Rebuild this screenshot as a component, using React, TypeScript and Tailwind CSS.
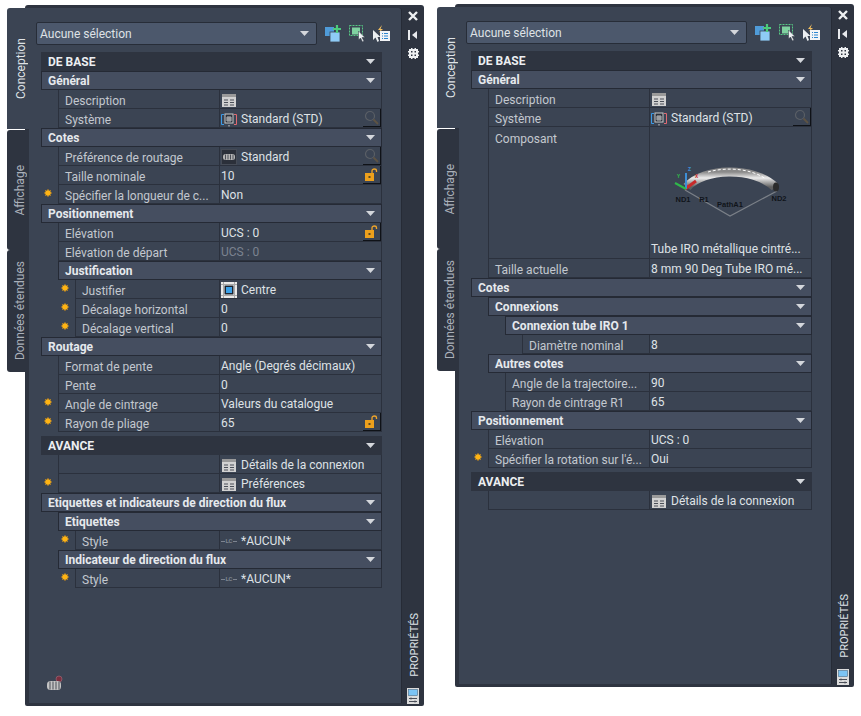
import React from "react";

function Arrow(): React.ReactElement {
    return (
        <svg width="9" height="5" viewBox="0 0 9 5" className="shrink-0">
            <path d="M0 0H9L4.5 5Z" fill="#d4d7dc" />
        </svg>
    );
}

function Dot(): React.ReactElement {
    return (
        <svg width="8" height="8" viewBox="0 0 8 8" className="shrink-0">
            <path
                d="M4 0V8M0 4H8M1.2 1.2L6.8 6.8M6.8 1.2L1.2 6.8"
                stroke="#e89a10"
                strokeWidth=".8"
            />
            <circle cx="4" cy="4" r="2.8" fill="#ffb414" />
        </svg>
    );
}

function TableIcon(): React.ReactElement {
    return (
        <svg width="14" height="13" viewBox="0 0 14 13" className="mx-px">
            <rect width="14" height="13" fill="#d2d2d2" />
            <rect width="14" height="3" fill="#9a9a9a" />
            <path d="M2 6H6M8 6H12M2 8.5H6M8 8.5H12M2 11H6M8 11H12" stroke="#4a4f58" />
        </svg>
    );
}

function SystemIcon(): React.ReactElement {
    return (
        <svg width="16" height="15" viewBox="0 0 16 15">
            <path d="M3 2.5H.5V12.5H3" fill="none" stroke="#3b9be8" />
            <path d="M13 2.5H15.5V12.5H13" fill="none" stroke="#e06a72" />
            <rect x="4" y="2" width="8" height="9" fill="#2c323d" stroke="#c9c9c9" />
            <path d="M6 5H10V9H6ZM8 5V9M6 7H10" fill="none" stroke="#dcdcdc" strokeWidth=".8" />
            <rect x="7.5" y="13" width="1" height="1.5" fill="#cfcfcf" />
        </svg>
    );
}

function CoilIcon(): React.ReactElement {
    return (
        <svg width="16" height="16" viewBox="0 0 16 16">
            <rect x=".5" y=".5" width="15" height="15" fill="#2b303a" stroke="#454b56" />
            <rect x="2" y="5" width="12" height="6" rx="2.5" fill="#b5b5b5" />
            <path d="M4.5 5.5V10.5M7 5.5V10.5M9.5 5.5V10.5M12 5.5V10.5" stroke="#4b4f57" />
        </svg>
    );
}

function CentreIcon(): React.ReactElement {
    return (
        <svg width="16" height="16" viewBox="0 0 16 16">
            <rect width="16" height="16" fill="#e9e9e9" />
            <path d="M2.5 0V16M13.5 0V16M0 2.5H16M0 13.5H16" stroke="#a8a8a8" />
            <rect x="3" y="3" width="10" height="10" fill="#f4f4f4" />
            <rect x="3.5" y="3.5" width="9" height="9" fill="#1d2530" />
            <rect x="5" y="5" width="6" height="6" fill="#3aa0e8" />
        </svg>
    );
}

function LineIcon(): React.ReactElement {
    return (
        <span className="flex w-[16px] items-center text-[6px] leading-none font-bold text-[#7d8490]">
            <span className="h-px w-[4px] bg-[#7d8490]" />
            <span className="px-px">LC</span>
            <span className="h-px w-[4px] bg-[#7d8490]" />
        </span>
    );
}

function SearchButton(): React.ReactElement {
    return (
        <span className="ml-auto flex h-[18px] w-[18px] items-center justify-center border-r border-b border-[#0f1217]">
            <svg width="15" height="15" viewBox="0 0 15 15">
                <circle cx="6" cy="6" r="4.5" fill="none" stroke="#5a5f66" strokeWidth="1.2" />
                <path d="M9.5 9.5L14 14" stroke="#5e5343" strokeWidth="1.8" />
            </svg>
        </span>
    );
}

function LockButton(): React.ReactElement {
    return (
        <span className="ml-auto flex h-[18px] w-[18px] items-center justify-center border-r border-b border-[#0f1217]">
            <svg width="13" height="13" viewBox="0 0 13 13">
                <path d="M7 5V2.8C7 .4 11.5 .4 11.5 2.8V4" fill="none" stroke="#f0a52a" strokeWidth="1.3" />
                <rect x="0" y="5" width="9" height="8" fill="#eda01c" />
                <rect x="3.5" y="8" width="2" height="2" fill="#5e4a20" />
            </svg>
        </span>
    );
}

function BaseBar({ title }: { title: string }): React.ReactElement {
    return (
        <div className="flex h-[19px] items-center justify-between bg-[#2e3440] pr-[7px] pl-[7px] text-[12px] font-bold text-[#eceef1]">
            <span>{title}</span>
            <Arrow />
        </div>
    );
}

function Section({ title, level = 0 }: { title: string; level?: number }): React.ReactElement {
    const indent = level === 2 ? "ml-[34px]" : level === 1 ? "ml-[17px]" : "ml-0";
    return (
        <div
            className={`${indent} flex h-[19px] items-center justify-between border
            border-[#252a35] bg-[#454e60] pr-[6px] pl-[6px] text-[12px] font-bold text-[#e6e9ed]`}
        >
            <span>{title}</span>
            <Arrow />
        </div>
    );
}

type RowProps = {
    label?: string;
    value?: string;
    level?: number;
    dot?: boolean;
    dim?: boolean;
    icon?: React.ReactNode;
    action?: React.ReactNode;
};

function Row({ label, value, level = 1, dot, dim, icon, action }: RowProps): React.ReactElement {
    const gutter = level === 3 ? "w-[51px]" : level === 2 ? "w-[34px]" : "w-[17px]";
    return (
        <div className="flex h-[19px]">
            <div className={`${gutter} flex shrink-0 items-center justify-end pr-[6px] pb-[4px]`}>
                {dot && <Dot />}
            </div>
            <div className="flex min-w-0 flex-1 items-center border-b border-l border-[#2b313d] pt-[4px] pl-[6px] text-[#c3c8cf]">
                <span className="whitespace-nowrap">{label}</span>
            </div>
            <div
                className={`flex w-[163px] shrink-0 items-center border-r border-b border-l border-[#2b313d] pl-[1px]
                ${dim ? "text-[#7b8390]" : "text-[#dfe2e6]"}`}
            >
                <span className="flex items-center gap-[4px] pt-[2px]">
                    {icon}
                    {value && <span className="whitespace-nowrap">{value}</span>}
                </span>
                {action}
            </div>
        </div>
    );
}

function TubePreview(): React.ReactElement {
    return (
        <svg width="146" height="60" viewBox="0 0 146 60" className="mx-auto">
            <defs>
                <linearGradient id="tubeFill" x1="0" y1="0" x2="0" y2="1">
                    <stop offset="0" stopColor="#8a8a8a" />
                    <stop offset="0.4" stopColor="#ececec" />
                    <stop offset="1" stopColor="#5f5f5f" />
                </linearGradient>
            </defs>
            <path d="M27 29L72 55L119 30" fill="none" stroke="#7b8088" strokeWidth="1.2" />
            <path d="M29 26C45 7 95 5 117 26" fill="none" stroke="url(#tubeFill)" strokeWidth="9" />
            <path d="M50 11C68 6 92 7 108 18" fill="none" stroke="#ffffff" strokeWidth="1" strokeDasharray="3 2" />
            <path d="M27 28L38 20" stroke="#c92a2a" strokeWidth="3" />
            <ellipse cx="118" cy="26" rx="3" ry="4.5" fill="#2c2c2c" />
            <path d="M28 28V12" stroke="#3d8fd8" strokeWidth="2" />
            <path d="M28 28L17 22" stroke="#2fb84a" strokeWidth="2" />
            <g fontFamily="Liberation Sans" fontSize="7.5" fontWeight="bold" fill="#10141a" textAnchor="middle">
                <text x="25" y="41">ND1</text>
                <text x="46" y="41">R1</text>
                <text x="72" y="46">PathA1</text>
                <text x="121" y="40">ND2</text>
            </g>
            <text x="30" y="10" fontSize="5" fontWeight="bold" fill="#3d8fd8">Z</text>
            <text x="19" y="17" fontSize="5" fontWeight="bold" fill="#2fb84a">Y</text>
            <text x="37" y="17" fontSize="5" fontWeight="bold" fill="#c92a2a">X</text>
        </svg>
    );
}

function Tabs(): React.ReactElement {
    return (
        <div className="relative z-10 -mr-[4px] flex w-[22px] shrink-0 flex-col pt-[3px]">
            <div className="flex h-[121px] w-[22px] items-center justify-center rounded-tl-[3px] bg-[#3b4453] pl-[5px] text-[12px] text-[#dfe2e6]">
                <span className="rotate-180 [writing-mode:vertical-rl]">Conception</span>
            </div>
            <div className="mt-px flex h-[120px] w-[18px] items-center justify-center rounded-l-[3px] bg-[#2e3440] pl-[8px] text-[12px] text-[#aab0ba]">
                <span className="rotate-180 whitespace-nowrap [writing-mode:vertical-rl]">Affichage</span>
            </div>
            <div className="flex h-[122px] w-[18px] items-center justify-center rounded-l-[3px] bg-[#2e3440] pl-[8px] text-[12px] text-[#aab0ba]">
                <span className="rotate-180 whitespace-nowrap [writing-mode:vertical-rl]">Données étendues</span>
            </div>
        </div>
    );
}

function Strip(): React.ReactElement {
    return (
        <div className="flex w-[22px] shrink-0 flex-col items-center pt-[3px]">
            <svg width="10" height="10" viewBox="0 0 10 10">
                <path d="M1 1L9 9M9 1L1 9" stroke="#eef0f2" strokeWidth="2.4" />
            </svg>
            <svg width="10" height="10" viewBox="0 0 10 10" className="mt-[9px]">
                <rect x="0" y="0" width="2" height="10" fill="#e8eaed" />
                <path d="M9 1V9L4 5Z" fill="#e8eaed" />
            </svg>
            <svg width="11" height="11" viewBox="0 0 11 11" className="mt-[8px]">
                <path
                    d="M1 1H3V0H4.5V1H6.5V0H8V1H10V3H11V4.5H10V6.5H11V8H10V10H8V11H6.5V10H4.5V11H3V10H1V8H0V6.5H1V4.5H0V3H1Z"
                    fill="#eef0f2"
                />
                <path d="M3 3H4.5V4.5H3ZM6.5 3H8V4.5H6.5ZM3 6.5H4.5V8H3ZM6.5 6.5H8V8H6.5Z" fill="#2e3440" />
            </svg>
            <span className="mt-auto rotate-180 pr-[4px] text-[11px] whitespace-nowrap text-[#dfe3e8] [writing-mode:vertical-rl]">
                PROPRIÉTÉS
            </span>
            <svg width="12" height="16" viewBox="0 0 12 16" className="mt-[11px] mb-[-1px]">
                <rect width="12" height="16" fill="#dcdcdc" />
                <rect x="1.5" y="1.5" width="9" height="6" fill="#7cc4f4" stroke="#4a6d88" strokeWidth=".6" />
                <path d="M2 10.5H10M2 13.5H10M4 9.5V11.5M8 12.5V14.5" stroke="#4a4f58" />
            </svg>
        </div>
    );
}

function Toolbar(): React.ReactElement {
    return (
        <div className="flex items-center pl-[7px]">
            <div className="flex h-[23px] w-[281px] items-center justify-between rounded-[2px] border border-[#272d38] bg-[#4c586c] pr-[7px] pl-[3px] text-[12px] text-[#dfe2e6]">
                <span>Aucune sélection</span>
                <Arrow />
            </div>
            <svg width="17" height="17" viewBox="0 0 17 17" className="ml-[8px]">
                <rect x="0" y="2" width="9" height="9" fill="#4f9bd8" />
                <rect x="5" y="7" width="10" height="10" fill="#8fcbf6" stroke="#3b4453" strokeWidth=".8" />
                <path d="M12 0V8M8 4H16" stroke="#4ccb7c" strokeWidth="2.2" />
            </svg>
            <svg width="17" height="17" viewBox="0 0 17 17" className="ml-[7px]">
                <rect x=".5" y=".5" width="13" height="10" fill="none" stroke="#57c885" strokeDasharray="2 1" />
                <rect x="3" y="2.5" width="8" height="7" fill="#7fd1a0" />
                <path d="M9.5 6V15L11.5 13L13.5 17L15 16L13 12.5H16Z" fill="#eceff2" stroke="#2e3440" strokeWidth=".5" />
            </svg>
            <svg width="17" height="17" viewBox="0 0 17 17" className="ml-[7px]">
                <path d="M0 5V15L2.5 12.5L4.5 17L6 16L4.5 12H7.5Z" fill="#eceff2" />
                <path d="M9 0L5 5H7.5L5.5 8L10 4H7.5Z" fill="#f4c060" />
                <rect x="7" y="6" width="10" height="10" fill="#f2f4f6" />
                <path d="M9 8.5H10M11 8.5H15M9 11H10M11 11H15M9 13.5H10M11 13.5H15" stroke="#2c86d0" />
            </svg>
        </div>
    );
}

type PaletteProps = {
    height: string;
    extra?: string;
    footer?: boolean;
    children: React.ReactNode;
};

function Palette({ height, extra = "", footer, children }: PaletteProps): React.ReactElement {
    return (
        <div className={`flex shrink-0 ${height} ${extra}`}>
            <Tabs />
            <div className="flex w-[399px] rounded-t-[3px] rounded-b-[2px] bg-[#2e3440] py-[3px] pl-[4px]">
                <div className="flex w-[373px] flex-col rounded-tr-[3px] border-r border-[#262b36] bg-[#3b4453] pt-[14px]">
                    <Toolbar />
                    <div className="mt-[7px] ml-[12px] w-[341px] text-[12px]">{children}</div>
                    {footer && (
                        <svg width="16" height="17" viewBox="0 0 16 17" className="mt-auto mb-[11px] ml-[18px]">
                            <circle cx="12" cy="4" r="3" fill="#7a2f3f" stroke="#a5717d" strokeWidth=".6" />
                            <rect x="0" y="6" width="14" height="9" rx="3.5" fill="#c4c4c4" />
                            <path d="M3 6.5V14.5M6 6.5V14.5M9 6.5V14.5M12 6.5V14.5" stroke="#4b4f57" />
                        </svg>
                    )}
                </div>
                <Strip />
            </div>
        </div>
    );
}

export default function App(): React.ReactElement {
    return (
        <div className="flex gap-[13px] bg-white pt-[4px] pl-[7px] h-[716px] w-[861px] overflow-hidden font-['Roboto',sans-serif]">
            <Palette height="h-[701px]" extra="mt-px" footer>
                <BaseBar title="DE BASE" />
                <Section title="Général" />
                <Row label="Description" icon={<TableIcon />} />
                <Row label="Système" value="Standard (STD)" icon={<SystemIcon />} action={<SearchButton />} />
                <Section title="Cotes" />
                <Row label="Préférence de routage" value="Standard" icon={<CoilIcon />} action={<SearchButton />} />
                <Row label="Taille nominale" value="10" action={<LockButton />} />
                <Row label="Spécifier la longueur de c..." value="Non" dot />
                <Section title="Positionnement" />
                <Row label="Elévation" value="UCS : 0" action={<LockButton />} />
                <Row label="Elévation de départ" value="UCS : 0" dim />
                <Section title="Justification" level={1} />
                <Row label="Justifier" value="Centre" level={2} dot icon={<CentreIcon />} />
                <Row label="Décalage horizontal" value="0" level={2} dot />
                <Row label="Décalage vertical" value="0" level={2} dot />
                <Section title="Routage" />
                <Row label="Format de pente" value="Angle (Degrés décimaux)" />
                <Row label="Pente" value="0" />
                <Row label="Angle de cintrage" value="Valeurs du catalogue" dot />
                <Row label="Rayon de pliage" value="65" dot action={<LockButton />} />
                <div className="h-[4px]" />
                <BaseBar title="AVANCE" />
                <Row value="Détails de la connexion" icon={<TableIcon />} />
                <Row value="Préférences" dot icon={<TableIcon />} />
                <Section title="Etiquettes et indicateurs de direction du flux" />
                <Section title="Etiquettes" level={1} />
                <Row label="Style" value="*AUCUN*" level={2} dot icon={<LineIcon />} />
                <Section title="Indicateur de direction du flux" level={1} />
                <Row label="Style" value="*AUCUN*" level={2} dot icon={<LineIcon />} />
            </Palette>
            <Palette height="h-[683px]">
                <BaseBar title="DE BASE" />
                <Section title="Général" />
                <Row label="Description" icon={<TableIcon />} />
                <Row label="Système" value="Standard (STD)" icon={<SystemIcon />} action={<SearchButton />} />
                <div className="flex h-[132px]">
                    <div className="w-[17px] shrink-0" />
                    <div className="flex-1 border-b border-l border-[#2b313d] pt-[3px] pl-[6px] text-[#c3c8cf]">
                        Composant
                    </div>
                    <div className="flex w-[163px] shrink-0 flex-col border-r border-b border-l border-[#2b313d] pl-[1px] text-[#dfe2e6]">
                        <div className="mt-[34px]">
                            <TubePreview />
                        </div>
                        <span className="mt-auto whitespace-nowrap">Tube IRO métallique cintré...</span>
                    </div>
                </div>
                <Row label="Taille actuelle" value="8 mm 90 Deg Tube IRO mé..." />
                <Section title="Cotes" />
                <Section title="Connexions" level={1} />
                <Section title="Connexion tube IRO 1" level={2} />
                <Row label="Diamètre nominal" value="8" level={3} />
                <Section title="Autres cotes" level={1} />
                <Row label="Angle de la trajectoire..." value="90" level={2} />
                <Row label="Rayon de cintrage R1" value="65" level={2} />
                <Section title="Positionnement" />
                <Row label="Elévation" value="UCS : 0" />
                <Row label="Spécifier la rotation sur l'é..." value="Oui" dot />
                <div className="h-[4px]" />
                <BaseBar title="AVANCE" />
                <Row value="Détails de la connexion" icon={<TableIcon />} />
            </Palette>
        </div>
    );
}
